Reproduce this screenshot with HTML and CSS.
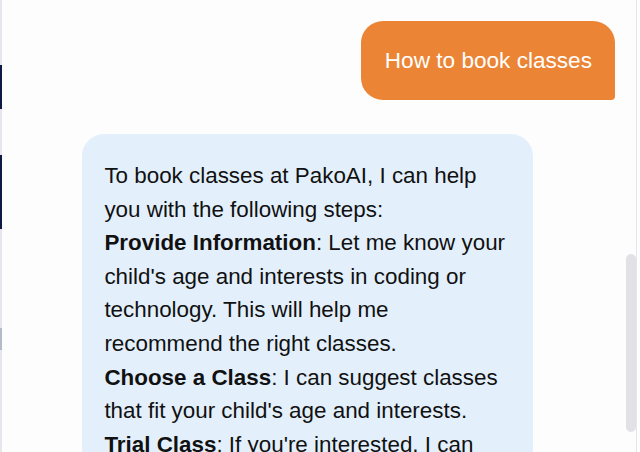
FILE: index.html
```html
<!DOCTYPE html>
<html lang="en">
<head>
  <meta charset="UTF-8">
  <meta name="viewport" content="width=device-width, initial-scale=1.0">
  <title>PakoAI Chat</title>
  <link rel="stylesheet" href="styles.css">
</head>
<body>
  <div class="frame">
    <div class="edge">
      <span class="edge-dark one"></span>
      <span class="edge-dark two"></span>
      <span class="edge-grey"></span>
    </div>
    <div class="chat">
      <div class="row user">
        <div class="bubble user-bubble">How to book classes</div>
      </div>
      <div class="row bot">
        <div class="bubble bot-bubble">
          To book classes at PakoAI, I can help you with the following steps:<br>
          <b>Provide Information</b>: Let me know your child's age and interests in coding or technology. This will help me recommend the right classes.<br>
          <b>Choose a Class</b>: I can suggest classes that fit your child's age and interests.<br>
          <b>Trial Class</b>: If you're interested, I can help you book a free trial class so your child can experience our teaching.<br>
          <b>Enrollment</b>: Once you've chosen, I can guide you through enrollment.
        </div>
      </div>
      <div class="scroll-thumb"></div>
    </div>
    <div class="side-line"></div>
  </div>
</body>
</html>
```

FILE: styles.css
```css
* {
  box-sizing: border-box;
}

html, body {
  margin: 0;
  padding: 0;
  height: 100%;
  overflow: hidden;
  background: #fff;
  font-family: "Liberation Sans", Arial, sans-serif;
  color: #111;
}

.frame {
  display: flex;
  height: 452px;
}

/* thin strip of the page behind the panel */
.edge {
  position: relative;
  width: 2px;
  background: #e6e7ec;
}

.edge-dark, .edge-grey {
  position: absolute;
  left: 0;
  width: 2px;
}

.edge-dark {
  background: #0f1a44;
}

.edge-dark.one {
  top: 65px;
  height: 44px;
}

.edge-dark.two {
  top: 155px;
  height: 74px;
}

.edge-grey {
  top: 328px;
  height: 22px;
  background: #b6bac8;
}

.chat {
  position: relative;
  flex: 1;
  padding: 21px 21px 0 80px;
  background: #fdfdfd;
}

.side-line {
  width: 1px;
  background: #e4e4e9;
  margin-right: 3px;
}

.row {
  display: flex;
}

.row.user {
  justify-content: flex-end;
  margin-bottom: 34px;
}

.bubble {
  font-size: 22.4px;
  line-height: 33.6px;
  border-radius: 22px;
}

.user-bubble {
  height: 79px;
  padding: 23px 23px 22px 23.5px;
  background: #ec8435;
  color: #fff;
  font-size: 22.6px;
  border-bottom-right-radius: 4px;
}

.bot-bubble {
  width: 451px;
  padding: 25px 22.4px 22.4px;
  background: #e3f0fc;
  color: #111;
}

.scroll-thumb {
  position: absolute;
  right: 0;
  top: 254px;
  width: 10px;
  height: 178px;
  border-radius: 5px;
  background: #e1e1e6;
}
```
